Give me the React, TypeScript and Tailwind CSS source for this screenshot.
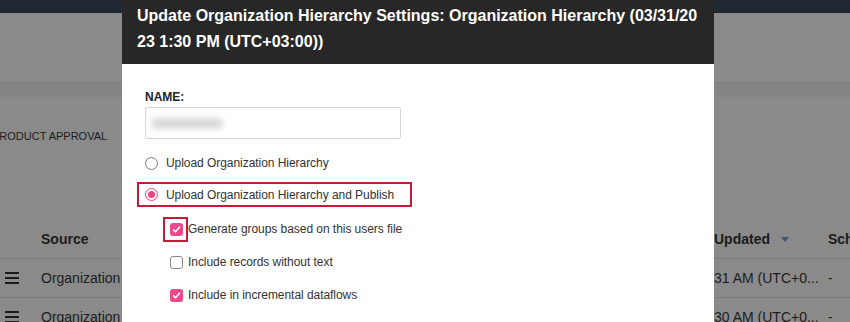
import React from "react";

function Hamburger() {
  return (
    <div className="flex w-[14px] flex-col gap-[3px]">
      <div className="h-[2px] bg-[#1c1c1c]" />
      <div className="h-[2px] bg-[#1c1c1c]" />
      <div className="h-[2px] bg-[#1c1c1c]" />
    </div>
  );
}

function Check({ checked }: { checked: boolean }) {
  if (!checked) {
    return <div className="h-[13px] w-[13px] rounded-[3px] border border-[#8a8a8a] bg-white" />;
  }
  return (
    <div className="flex h-[13px] w-[13px] items-center justify-center rounded-[3px] bg-[#ea4a8b]">
      <svg width="9" height="9" viewBox="0 0 9 9">
        <path d="M1.5 4.8 L3.6 6.8 L7.5 2.2" fill="none" stroke="white" strokeWidth="1.6" strokeLinecap="round" strokeLinejoin="round" />
      </svg>
    </div>
  );
}

function Radio({ selected }: { selected: boolean }) {
  if (!selected) {
    return <div className="h-[13px] w-[13px] shrink-0 rounded-full border border-[#7a7a7a] bg-white" />;
  }
  return (
    <div className="flex h-[13px] w-[13px] shrink-0 items-center justify-center rounded-full border border-[#ec4585] bg-white">
      <div className="h-[7px] w-[7px] rounded-full bg-[#ec4585]" />
    </div>
  );
}

export default function App() {
  const label = "text-[12px] tracking-[-0.05px] text-[#333333] whitespace-nowrap";
  return (
    <div className="relative h-[322px] w-[850px] overflow-hidden bg-[#8a8a8a] font-['Liberation_Sans',Arial,sans-serif]">
      {/* background page */}
      <div className="flex h-full flex-col">
        <div className="h-[13px] shrink-0 bg-[#1f2831]" />
        <div className="h-[70px] shrink-0 border-b border-[#7d7d7d] bg-[#8b8b8b]" />
        <div className="h-[14px] shrink-0 bg-[#858585]" />
        <div className="flex h-[123px] shrink-0 flex-col">
          <div className="mt-[32px] -ml-[8px] whitespace-nowrap text-[11px] leading-[14px] text-[#1c1c1c]">PRODUCT APPROVAL</div>
        </div>
        <div className="flex h-[39px] shrink-0 items-center border-b border-[#7a7a7a] text-[14px] font-bold text-[#1c1c1c]">
          <div className="w-[41px] shrink-0" />
          <div className="w-[673px] shrink-0">Source</div>
          <div className="flex w-[114px] shrink-0 items-center">
            Updated
            <svg className="ml-[11px]" width="8" height="5" viewBox="0 0 8 5">
              <path d="M0 0 L8 0 L4 5 Z" fill="#3d5570" />
            </svg>
          </div>
          <div className="shrink-0 whitespace-nowrap">Schedule</div>
        </div>
        {["31", "30"].map((m) => (
          <div key={m} className="flex h-[39px] shrink-0 items-center border-b border-[#7a7a7a] text-[14px] text-[#1c1c1c]">
            <div className="flex w-[41px] shrink-0 pl-[5px]">
              <Hamburger />
            </div>
            <div className="w-[673px] shrink-0 whitespace-nowrap">Organization Hierarchy</div>
            <div className="w-[114px] shrink-0 whitespace-nowrap">{m} AM (UTC+0...</div>
            <div className="shrink-0">-</div>
          </div>
        ))}
      </div>

      {/* modal */}
      <div className="absolute left-[122px] top-0 flex h-[340px] w-[592px] flex-col bg-white">
        <div className="h-[64px] shrink-0 bg-[#272727] pl-[15px] pt-[3px] text-[16px] font-bold leading-[26px] text-white">
          <div className="whitespace-nowrap">Update Organization Hierarchy Settings: Organization Hierarchy (03/31/20</div>
          <div className="whitespace-nowrap">23 1:30 PM (UTC+03:00))</div>
        </div>
        <div className="flex flex-col pl-[23px] pt-[26px]">
          <div className="text-[12px] font-bold leading-[14px] text-[#222222]">NAME:</div>
          <div className="mt-[3px] flex h-[32px] w-[256px] items-center rounded-[2px] border border-[#d6d6d6] pl-[5px]">
            <div className="h-[11px] w-[72px] rounded-full bg-[#d8d8d8] blur-[3px]" />
          </div>
          <div className="mt-[14px] flex h-[20px] items-center gap-[8px]">
            <Radio selected={false} />
            <span className={label}>Upload Organization Hierarchy</span>
          </div>
          <div className="mt-[9px] -ml-[8px] flex h-[25px] w-[275px] items-center gap-[8px] border-2 border-[#c41a35] pl-[6px]">
            <Radio selected={true} />
            <span className={label}>Upload Organization Hierarchy and Publish</span>
          </div>
          <div className="mt-[11px] flex flex-col gap-[11px] pl-[25px]">
            {[
              { t: "Generate groups based on this users file", c: true, h: true },
              { t: "Include records without text", c: false, h: false },
              { t: "Include in incremental dataflows", c: true, h: false },
            ].map((r) => (
              <div key={r.t} className="flex h-[22px] items-center">
                <div className="relative w-[18px] shrink-0">
                  <Check checked={r.c} />
                  {r.h && (
                    <div className="absolute -left-[7px] -top-[6px] h-[25px] w-[25px] border-2 border-[#c41a35]" />
                  )}
                </div>
                <span className={label}>{r.t}</span>
              </div>
            ))}
          </div>
        </div>
      </div>
    </div>
  );
}
